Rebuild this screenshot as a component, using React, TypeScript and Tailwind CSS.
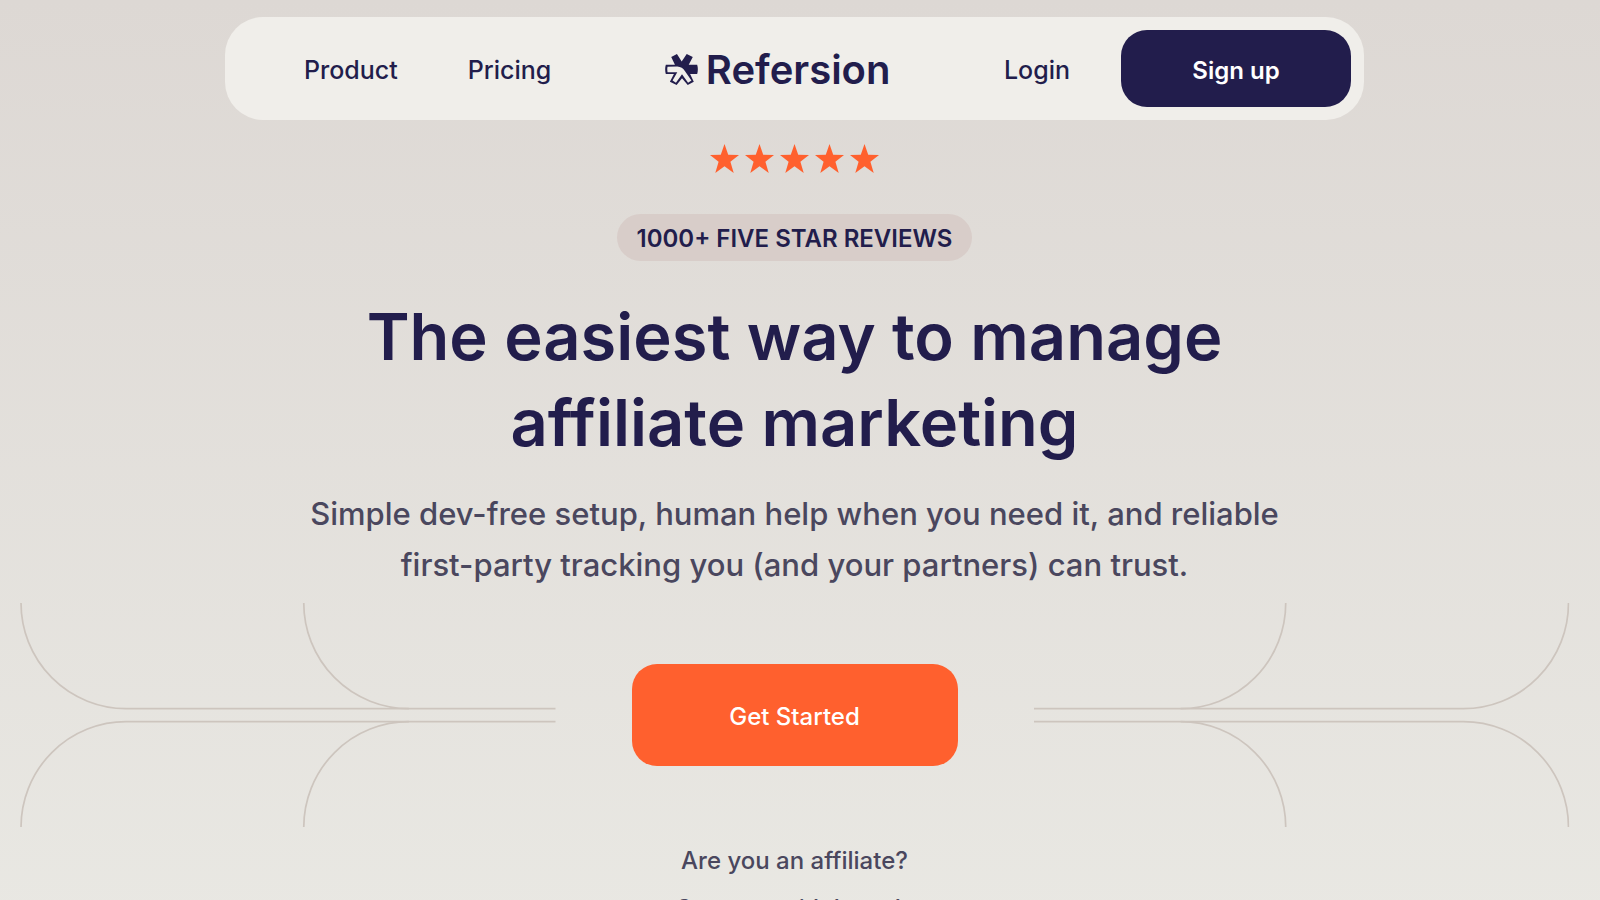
const LINE = "stroke-[#cdc5be]";

function LogoMark() {
  return (
    <svg viewBox="0 0 97 92" className="h-[31px] w-[33px] shrink-0" aria-hidden="true">
      <path
        className="fill-[#221d4c]"
        d="M18 9 L35 0 L49 22 L64 0 L82 9 L70 32 L95 32 Q99 45 95 59 L74 59 L85 82 L67 92 L50 72 L34 92 L14 82 L26 59 L2 59 Q-2 45 2 32 L29 32 Z"
      />
      <path
        className="fill-[#f0eeea]"
        d="M7 38 L36 37 Q51 38 59 51 L78 79 L68 85 L50 60 L32 85 L22 79 L36 54 L7 54 Q5 46 7 38 Z"
      />
    </svg>
  );
}

function Star() {
  return (
    <svg viewBox="0 0 28 28" className="size-[29px]" aria-hidden="true">
      <path
        className="fill-[#ff602e]"
        d="M14 0 L17.6 10.3 L28 10.6 L19.7 17.1 L22.9 28 L14 21.4 L5.1 28 L8.3 17.1 L0 10.6 L10.4 10.3 Z"
      />
    </svg>
  );
}

function Branches({ flip = false }: { flip?: boolean }) {
  return (
    <svg
      viewBox="0 0 535 224"
      fill="none"
      strokeWidth="1.7"
      aria-hidden="true"
      className={flip ? "min-w-0 flex-1 -scale-x-100" : "min-w-0 flex-1"}
    >
      <path className={LINE} d="M1 0 A105 105.5 0 0 0 106 105.5 H535" />
      <path className={LINE} d="M1 224 A105 105.5 0 0 1 106 118.5 H535" />
      <path className={LINE} d="M283.5 0 A105 105.5 0 0 0 388.5 105.5" />
      <path className={LINE} d="M283.5 224 A105 105.5 0 0 1 388.5 118.5" />
    </svg>
  );
}

export default function App() {
  return (
    <div className="min-h-screen bg-linear-to-b from-[#ddd8d4] to-[#e9e8e3] pt-[17px] pr-[11px] font-['Inter','Liberation_Sans',sans-serif] text-[#221d4c]">
      <header className="mx-auto flex max-w-[1139px] items-center justify-between rounded-[38px] bg-[#f0eeea] py-[13px] pr-[13px] pl-[79px] text-[25px] font-medium">
        <nav className="flex gap-[70px] pt-1">
          <a href="#product">Product</a>
          <a href="#pricing">Pricing</a>
        </nav>
        <a href="#home" className="flex items-center gap-2 pt-0.5 text-[40px] leading-[50px] font-semibold">
          <LogoMark />
          Refersion
        </a>
        <div className="flex items-center gap-[51px]">
          <a href="#login" className="pt-1">Login</a>
          <button type="button" className="h-[77px] w-[230px] rounded-[26px] bg-[#221d4c] pt-1 text-[24px] font-semibold text-white">
            Sign up
          </button>
        </div>
      </header>

      <main className="flex flex-col items-center text-center">
        <div className="mt-6 flex gap-1.5" role="img" aria-label="Five stars">
          <Star />
          <Star />
          <Star />
          <Star />
          <Star />
        </div>
        <p className="mt-[41px] rounded-full bg-[#d8cdc9] px-5 pt-0.5 text-[24px] leading-[45px] font-semibold">
          1000+ FIVE STAR REVIEWS
        </p>
        <h1 className="mt-[33px] text-[65px] leading-[86px] font-semibold">
          The easiest way to manage
          <br />
          affiliate marketing
        </h1>
        <p className="mt-[22px] text-[31px] leading-[51px] font-medium text-[#4a475e]">
          Simple dev-free setup, human help when you need it, and reliable
          <br />
          first-party tracking you (and your partners) can trust.
        </p>
        <div className="mt-[13px] flex w-full items-center gap-[76px] px-5">
          <Branches />
          <button type="button" className="h-[102px] w-[326px] shrink-0 rounded-[25px] bg-[#ff602e] pt-1 text-[24px] font-medium text-white">
            Get Started
          </button>
          <Branches flip />
        </div>
        <p className="mt-2.5 text-[24px] leading-[48px] font-medium text-[#4a475e]">
          Are you an affiliate?
          <br />
          <a href="#brands">Connect with brands</a>
        </p>
      </main>
    </div>
  );
}
